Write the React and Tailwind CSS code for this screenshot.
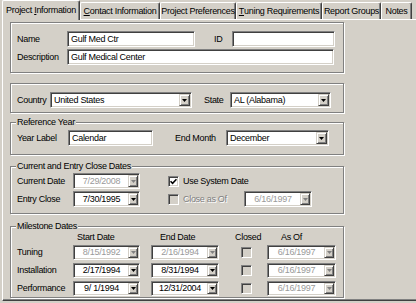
import React from "react";

const sunk =
  "border border-t-[#808080] border-l-[#808080] border-b-white border-r-white shadow-[inset_1px_1px_0_#404040,inset_-1px_-1px_0_#d4d0c8]";
const raised =
  "bg-[#d4d0c8] border border-t-[#d4d0c8] border-l-[#d4d0c8] border-b-[#404040] border-r-[#404040] shadow-[inset_1px_1px_0_#fff,inset_-1px_-1px_0_#808080]";
const etched = "border border-[#808080] shadow-[inset_1px_1px_0_#fff,1px_1px_0_#fff]";

function Arrow({ disabled }) {
  return (
    <svg width="5" height="3" viewBox="0 0 5 3">
      <path d="M0 0H5L2.5 3Z" fill={disabled ? "#808080" : "#000"} />
    </svg>
  );
}

function DropBtn({ disabled, w }) {
  return (
    <div className={`${raised} h-full ${w} flex items-center justify-center shrink-0`}>
      <Arrow disabled={disabled} />
    </div>
  );
}

function Input({ w, children }) {
  return (
    <div className={`${sunk} bg-white h-[16px] ${w} flex items-center pl-[3px] whitespace-pre`}>
      {children}
    </div>
  );
}

function Combo({ w, children }) {
  return (
    <div className={`${sunk} bg-white h-[16px] ${w} flex items-center p-[1px]`}>
      <span className="flex-1 pl-[2px] whitespace-pre">{children}</span>
      <DropBtn w="w-[11px]" />
    </div>
  );
}

function DateBox({ w, h = "h-[16px]", disabled, children }) {
  return (
    <div className={`${sunk} bg-white ${h} ${w} flex items-center p-[1px]`}>
      <span
        className={`flex-1 text-center whitespace-pre ${disabled ? "text-[#9a9a9a]" : "text-black"}`}
      >
        {children}
      </span>
      <DropBtn w="w-[10px]" disabled={disabled} />
    </div>
  );
}

function Check({ checked, disabled }) {
  return (
    <div
      className={`${sunk} ${disabled ? "bg-[#d4d0c8]" : "bg-white"} w-[11px] h-[11px] flex items-center justify-center shrink-0`}
    >
      {checked && (
        <svg width="7" height="7" viewBox="0 0 7 7">
          <path d="M0.5 3.2L2.6 5.4L6.5 1.2" stroke="#000" strokeWidth="1.6" fill="none" />
        </svg>
      )}
    </div>
  );
}

function Legend({ children }) {
  return (
    <legend className="px-[1px] -ml-[1px] bg-[#d4d0c8] h-[10px] leading-[10px]">{children}</legend>
  );
}

const disLabel = "text-[#808080] [text-shadow:1px_1px_0_#fff]";

function Tab({ w, children }) {
  return (
    <div
      className={`${w} h-[17px] flex items-center justify-center border-l border-t border-white border-r border-r-[#404040] shadow-[inset_-1px_0_0_#808080] rounded-t-[2px] whitespace-pre`}
    >
      {children}
    </div>
  );
}

export default function App() {
  return (
    <div className="w-[416px] h-[303px] bg-[#d4d0c8] overflow-hidden font-['Liberation_Sans',Arial,sans-serif] text-[9px] tracking-[-0.3px] leading-none text-black">
      {/* Tabs */}
      <div className="flex items-end h-[19px] pl-[2px] relative z-10">
        <div className="w-[78px] h-[20px] -mb-[1px] bg-[#d4d0c8] flex items-center justify-center border-l border-t border-white border-r border-r-[#404040] shadow-[inset_-1px_0_0_#808080] rounded-t-[2px] whitespace-pre pb-[1px]">
          Project <span className="underline">I</span>nformation
        </div>
        <Tab w="w-[80px]">
          <span className="underline">C</span>ontact Information
        </Tab>
        <Tab w="w-[76px]">Project Preferences</Tab>
        <Tab w="w-[86px]">
          <span className="underline">T</span>uning Requirements
        </Tab>
        <Tab w="w-[59px]">Report Groups</Tab>
        <Tab w="w-[31px]">Notes</Tab>
      </div>

      {/* Panel */}
      <div className="ml-[2px] w-[420px] h-[282px] border-t border-l border-white border-b border-b-[#404040] shadow-[inset_0_-1px_0_#808080] pl-[7px] flex flex-col">
        {/* Group 1 */}
        <div className={`${etched} mt-[2px] w-[334px] h-[51px] pl-[6px] pt-[8px] flex flex-col gap-[2px]`}>
          <div className="flex items-center">
            <span className="w-[50px]">Name</span>
            <Input w="w-[128px]">Gulf Med Ctr</Input>
            <span className="ml-[19px] w-[18px]">ID</span>
            <Input w="w-[103px]"></Input>
          </div>
          <div className="flex items-center">
            <span className="w-[50px]">Description</span>
            <Input w="w-[267px]">Gulf Medical Center</Input>
          </div>
        </div>

        {/* Group 2 */}
        <div className={`${etched} mt-[10px] w-[334px] h-[30px] pl-[6px] pt-[8px] flex items-start`}>
          <div className="flex items-center">
            <span className="w-[33px]">Country</span>
            <Combo w="w-[142px]">United States</Combo>
            <span className="ml-[12px] w-[26px]">State</span>
            <Combo w="w-[101px]">AL (Alabama)</Combo>
          </div>
        </div>

        {/* Group 3 */}
        <fieldset className={`${etched} mt-[4px] w-[334px] h-[38px] pl-[6px] pt-[3px]`}>
          <Legend>Reference Year</Legend>
          <div className="flex items-center">
            <span className="w-[51px]">Year Label</span>
            <Input w="w-[85px]">Calendar</Input>
            <span className="ml-[22px] w-[51px]">End Month</span>
            <Combo w="w-[103px]">December</Combo>
          </div>
        </fieldset>

        {/* Group 4 */}
        <fieldset className={`${etched} mt-[6px] w-[334px] h-[53px] pl-[6px] pt-[2px]`}>
          <Legend>Current and Entry Close Dates</Legend>
          <div className="flex flex-col gap-[2px]">
            <div className="flex items-center">
              <span className="w-[56px]">Current Date</span>
              <DateBox w="w-[67px]" disabled>
                7/29/2008
              </DateBox>
              <div className="ml-[28px] w-[76px] flex items-center gap-[4px] whitespace-nowrap">
                <Check checked />
                <span>Use System Date</span>
              </div>
            </div>
            <div className="flex items-center">
              <span className="w-[56px]">Entry Close</span>
              <DateBox w="w-[67px]">7/30/1995</DateBox>
              <div className="ml-[28px] w-[76px] flex items-center gap-[4px] whitespace-nowrap">
                <Check disabled />
                <span className={disLabel}>Close as Of</span>
              </div>
              <DateBox w="w-[68px]" disabled>
                6/16/1997
              </DateBox>
            </div>
          </div>
        </fieldset>

        {/* Group 5 */}
        <fieldset className={`${etched} mt-[7px] w-[334px] h-[77px] pl-[6px] pt-[1px]`}>
          <Legend>Milestone Dates</Legend>
          <div className="flex h-[11px] items-center">
            <span className="w-[60px]"></span>
            <span className="w-[83px]">Start Date</span>
            <span className="w-[75px]">End Date</span>
            <span className="w-[46px]">Closed</span>
            <span>As Of</span>
          </div>
          <div className="mt-[2px] flex flex-col gap-[3px]">
            {[
              ["Tuning", "8/15/1992", "2/16/1994", true],
              ["Installation", "2/17/1994", "8/31/1994", false],
              ["Performance", "9/ 1/1994", "12/31/2004", false],
            ].map(([label, s, e, dis]) => (
              <div key={label} className="flex items-center">
                <span className="w-[56px]">{label}</span>
                <DateBox w="w-[67px]" h="h-[15px]" disabled={dis}>
                  {s}
                </DateBox>
                <div className="ml-[11px]">
                  <DateBox w="w-[68px]" h="h-[15px]" disabled={dis}>
                    {e}
                  </DateBox>
                </div>
                <div className="ml-[22px]">
                  <Check disabled />
                </div>
                <div className="ml-[15px]">
                  <DateBox w="w-[69px]" h="h-[15px]" disabled>
                    6/16/1997
                  </DateBox>
                </div>
              </div>
            ))}
          </div>
        </fieldset>
      </div>
    </div>
  );
}
